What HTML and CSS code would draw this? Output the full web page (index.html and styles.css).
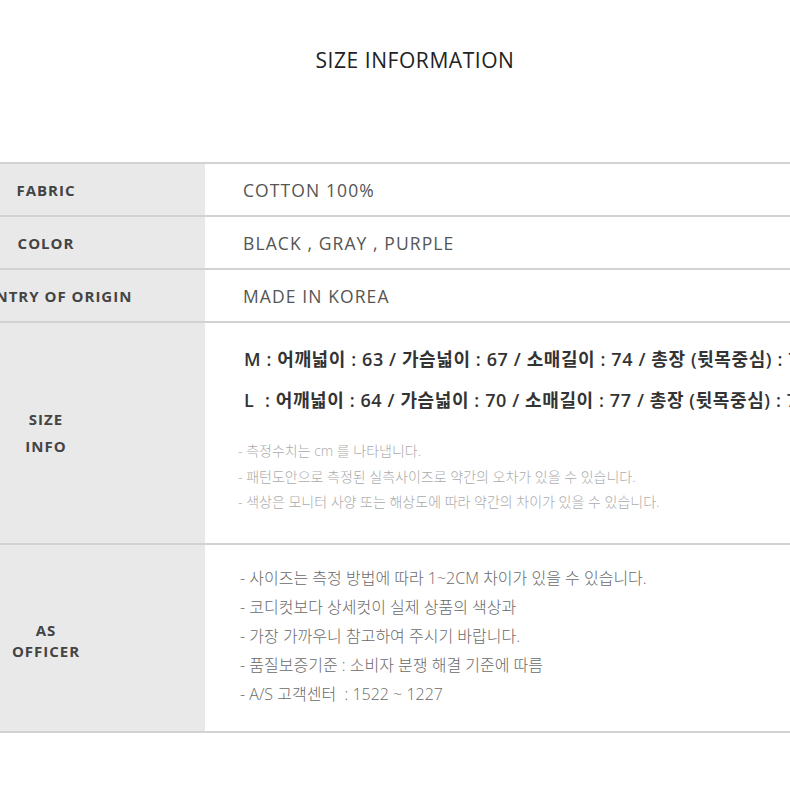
FILE: index.html
```html
<!DOCTYPE html>
<html lang="ko">
<head>
<meta charset="utf-8">
<link rel="stylesheet" href="styles.css">
</head>
<body>
<div class="page">
  <h1 class="title">SIZE INFORMATION</h1>
  <div class="spec">
    <div class="row row-short">
      <div class="label"><span>FABRIC</span></div>
      <div class="value">COTTON 100%</div>
    </div>
    <div class="row row-short">
      <div class="label"><span>COLOR</span></div>
      <div class="value">BLACK , GRAY , PURPLE</div>
    </div>
    <div class="row row-short">
      <div class="label"><span>COUNTRY OF ORIGIN</span></div>
      <div class="value">MADE IN KOREA</div>
    </div>
    <div class="row row-size">
      <div class="label"><span class="two">SIZE<br>INFO</span></div>
      <div class="value size-value">
        <div class="measure">M : 어깨넓이 : 63 / 가슴넓이 : 67 / 소매길이 : 74 / 총장 (뒷목중심) : 75</div>
        <div class="measure">L &nbsp;: 어깨넓이 : 64 / 가슴넓이 : 70 / 소매길이 : 77 / 총장 (뒷목중심) : 77</div>
        <ul class="notes">
          <li>- 측정수치는 cm 를 나타냅니다.</li>
          <li>- 패턴도안으로 측정된 실측사이즈로 약간의 오차가 있을 수 있습니다.</li>
          <li>- 색상은 모니터 사양 또는 해상도에 따라 약간의 차이가 있을 수 있습니다.</li>
        </ul>
      </div>
    </div>
    <div class="row row-as">
      <div class="label"><span class="two tight">AS<br>OFFICER</span></div>
      <div class="value as-value">
        <ul class="as-list">
          <li>- 사이즈는 측정 방법에 따라 1~2CM 차이가 있을 수 있습니다.</li>
          <li>- 코디컷보다 상세컷이 실제 상품의 색상과</li>
          <li>- 가장 가까우니 참고하여 주시기 바랍니다.</li>
          <li>- 품질보증기준 : 소비자 분쟁 해결 기준에 따름</li>
          <li>- A/S 고객센터 &nbsp;: 1522 ~ 1227</li>
        </ul>
      </div>
    </div>
  </div>
</div>
</body>
</html>
```

FILE: styles.css
```css
html, body {
  margin: 0;
  padding: 0;
  background: #ffffff;
  overflow: hidden;
}

.page {
  width: 790px;
  height: 790px;
  overflow: hidden;
  font-family: "Open Sans", "Noto Sans CJK KR", sans-serif;
}

.title {
  margin: 0;
  height: 162px;
  padding-top: 46px;
  padding-left: 40px;
  box-sizing: border-box;
  text-align: center;
  font-size: 21px;
  font-weight: 400;
  line-height: 28px;
  color: #222222;
  letter-spacing: 0.55px;
}

.spec {
  width: 900px;
  border-bottom: 2px solid #d2d2d2;
}

.row {
  display: grid;
  grid-template-columns: 205px 1fr;
  border-top: 2px solid #d2d2d2;
  box-sizing: border-box;
}

.row-short { height: 53px; }
.row-size { height: 222px; }
.row-as { height: 188px; }

.label {
  background: #e9e9e9;
  display: flex;
  align-items: center;
  overflow: visible;
}

.label span {
  display: block;
  width: 220px;
  margin-left: -64px;
  flex: none;
  text-align: center;
  font-size: 15px;
  font-weight: 700;
  color: #444444;
  letter-spacing: 1px;
  white-space: nowrap;
}

.label .two { line-height: 27px; }
.label .tight { line-height: 21px; margin-top: 6px; }

.value {
  display: flex;
  align-items: center;
  padding-left: 38px;
  font-size: 17.5px;
  color: #555555;
  letter-spacing: 1.1px;
  white-space: nowrap;
}

.size-value {
  flex-direction: column;
  align-items: flex-start;
  justify-content: flex-start;
  padding-top: 24px;
  letter-spacing: 0;
}

.measure {
  font-size: 18px;
  font-weight: 600;
  color: #333333;
  line-height: 24px;
  letter-spacing: 0.6px;
  margin-left: 1px;
  margin-bottom: 17px;
}

.notes {
  list-style: none;
  margin: 0;
  padding: 0;
  margin-left: -5px;
  margin-top: 9px;
  font-size: 14px;
  font-weight: 300;
  line-height: 25.5px;
  color: #ababab;
}

.as-value {
  align-items: flex-start;
  padding-top: 19px;
  letter-spacing: 0;
}

.as-list {
  list-style: none;
  margin: 0;
  padding: 0;
  margin-left: -3px;
  font-size: 16px;
  line-height: 29px;
  color: #6a6a6a;
  font-weight: 300;
}
```
